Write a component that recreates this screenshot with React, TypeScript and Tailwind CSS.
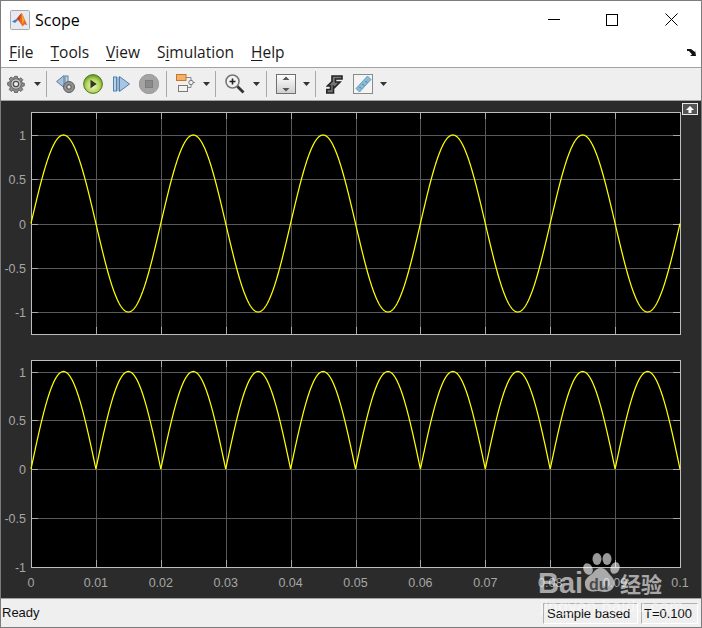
const menus = [
  { pre: "", key: "F", post: "ile" },
  { pre: "", key: "T", post: "ools" },
  { pre: "", key: "V", post: "iew" },
  { pre: "S", key: "i", post: "mulation" },
  { pre: "", key: "H", post: "elp" },
];

const LEFT = 30;
const RIGHT = 679;
const XW = RIGHT - LEFT;

const curve = (fn: (t: number) => number) =>
  Array.from({ length: 1301 }, (_, i) => {
    const t = (i / 1300) * 0.1;
    return `${i ? "L" : "M"}${(LEFT + (t / 0.1) * XW).toFixed(2)} ${fn(t).toFixed(2)}`;
  }).join(" ");

type PlotProps = {
  height: number;
  top: number;
  bottom: number;
  zero: number;
  unit: number;
  rect: boolean;
  xLabels?: boolean;
};

const Plot = ({ height, top, bottom, zero, unit, rect, xLabels }: PlotProps) => {
  const ys = [1, 0.5, 0, -0.5, -1];
  const d = curve((t) => {
    const s = Math.sin((2 * Math.PI * t) / 0.02);
    return zero - unit * (rect ? Math.abs(s) : s);
  });
  return (
    <svg width="700" height={height} className="block" style={{ fontFamily: '"Liberation Sans", Arial, sans-serif' }}>
      <rect x={LEFT + 0.5} y={top + 0.5} width={XW} height={bottom - top} fill="#000" />
      {ys.map((v) => {
        const y = Math.round(zero - v * unit) + 0.5;
        return (
          <g key={v}>
            {y < bottom && <line x1={LEFT} x2={RIGHT} y1={y} y2={y} stroke="#585858" />}
            <line x1={LEFT} x2={LEFT + 7} y1={y} y2={y} stroke="#a8a8a8" />
            <line x1={RIGHT - 7} x2={RIGHT} y1={y} y2={y} stroke="#a8a8a8" />
            <text x="25" y={y + 4.5} textAnchor="end" fontSize="12.5" fill="#a6a6a6">
              {v}
            </text>
          </g>
        );
      })}
      {Array.from({ length: 9 }, (_, i) => {
        const x = Math.round(LEFT + ((i + 1) * XW) / 10) + 0.5;
        return (
          <g key={i}>
            <line x1={x} x2={x} y1={top} y2={bottom} stroke="#585858" />
            <line x1={x} x2={x} y1={top} y2={top + 7} stroke="#a8a8a8" />
            <line x1={x} x2={x} y1={bottom - 7} y2={bottom} stroke="#a8a8a8" />
          </g>
        );
      })}
      <rect x={LEFT + 0.5} y={top + 0.5} width={XW} height={bottom - top} fill="none" stroke="#bdbdbd" />
      <path d={d} fill="none" stroke="#ffff00" strokeWidth="1.25" />
      {xLabels &&
        ["0", "0.01", "0.02", "0.03", "0.04", "0.05", "0.06", "0.07", "0.08", "0.09", "0.1"].map((l, i) => (
          <text key={l} x={LEFT + (i * XW) / 10} y={bottom + 19.5} textAnchor="middle" fontSize="12.5" fill="#a6a6a6">
            {l}
          </text>
        ))}
    </svg>
  );
};

const Caret = ({ className }: { className: string }) => (
  <svg width="7" height="4" viewBox="0 0 7 4" className={className}>
    <path d="M0 0h7L3.5 4z" fill="#333" />
  </svg>
);

const Sep = ({ className }: { className: string }) => <div className={`w-px h-[26px] bg-[#a9a9a9] ${className}`} />;

const Gear = () => (
  <svg width="18" height="18" viewBox="0 0 18 18">
    <path
      d="M7.500 0.500h3l.5 2.200 1.600.7 2-1.200 2.100 2.100-1.200 2 .7 1.600 2.200.5v3l-2.200.5-.7 1.600 1.200 2-2.100 2.100-2-1.200-1.600.7-.5 2.200h-3l-.5-2.200-1.600-.7-2 1.200-2.100-2.100 1.200-2-.7-1.600L-.5 10.500v-3l2.200-.5.7-1.600-1.200-2 2.100-2.100 2 1.200 1.600-.7z"
      transform="translate(1.100 0.900) scale(0.88)"
      fill="#8c8c8c"
      stroke="#5f5f5f"
    />
    <circle cx="9" cy="9" r="5.200" fill="#c9c9c9" stroke="#666" />
    <circle cx="9" cy="9" r="2.700" fill="#efefef" stroke="#4f4f4f" strokeWidth="1.300" />
  </svg>
);

const StepBack = () => (
  <svg width="20" height="20" viewBox="0 0 20 20">
    <path d="M8 1.500v12L0.500 7.500z" fill="#a9c2dc" stroke="#5c7ea3" />
    <rect x="9" y="2" width="3" height="11" fill="#c4d6e8" stroke="#5c7ea3" />
    <circle cx="13" cy="13" r="5.500" fill="#8f8f8f" stroke="#5f5f5f" />
    <circle cx="13" cy="13" r="2.200" fill="#dcdcdc" stroke="#4f4f4f" />
  </svg>
);

const Play = () => (
  <svg width="20" height="20" viewBox="0 0 20 20">
    <defs>
      <radialGradient id="pl" cx="50%" cy="60%" r="55%">
        <stop offset="0%" stopColor="#eef6c8" />
        <stop offset="65%" stopColor="#b3d65f" />
        <stop offset="100%" stopColor="#6f9e2a" />
      </radialGradient>
    </defs>
    <circle cx="10" cy="10" r="9.400" fill="url(#pl)" stroke="#4f7a1d" />
    <path d="M7.500 5.800v8.400l6.200-4.200z" fill="#2f3a1c" />
  </svg>
);

const StepFwd = () => (
  <svg width="18" height="18" viewBox="0 0 18 18">
    <rect x="0.500" y="2" width="3" height="14" fill="#b9d0e6" stroke="#4f7fb0" />
    <rect x="4.500" y="2" width="1" height="14" fill="#4f7fb0" />
    <path d="M6.500 1.500v15L16.500 9z" fill="#a9c5e0" stroke="#4f7fb0" />
  </svg>
);

const Stop = () => (
  <svg width="20" height="20" viewBox="0 0 20 20">
    <circle cx="10" cy="10" r="9.700" fill="#a3a3a3" stroke="#9a9a9a" />
    <rect x="6.500" y="6.500" width="7" height="7" fill="#8a8a8a" stroke="#7d7d7d" />
  </svg>
);

const Blocks = () => (
  <svg width="20" height="20" viewBox="0 0 20 20">
    <path d="M10 3.500h5v5M15 8.500h4M15 8.500v5h-3" fill="none" stroke="#8a8a8a" />
    <rect x="0.500" y="0.500" width="9.500" height="6" fill="#f4b06a" stroke="#c9762a" />
    <rect x="2.500" y="11.500" width="9" height="6" fill="#f2f2f2" stroke="#7a7a7a" />
    <circle cx="15" cy="8.500" r="2.200" fill="#efefef" stroke="#7a7a7a" />
  </svg>
);

const Zoom = () => (
  <svg width="20" height="20" viewBox="0 0 20 20">
    <circle cx="7.500" cy="7.500" r="6.500" fill="#f3f3f3" stroke="#777" strokeWidth="1.600" />
    <path d="M4.500 7.500h6M7.500 4.500v6" stroke="#222" strokeWidth="1.600" />
    <path d="M12.500 12.500l6 6" stroke="#333" strokeWidth="2.800" />
  </svg>
);

const Fit = () => (
  <svg width="20" height="20" viewBox="0 0 20 20">
    <defs>
      <linearGradient id="ft" x1="0" y1="0" x2="0" y2="1">
        <stop offset="0%" stopColor="#ffffff" />
        <stop offset="100%" stopColor="#cfcfcf" />
      </linearGradient>
    </defs>
    <rect x="0.500" y="0.500" width="19" height="19" fill="url(#ft)" stroke="#707070" />
    <path d="M10 2.500l3.500 3.500h-7z M10 17.500l-3.500-3.500h7z" fill="#555" />
  </svg>
);

const CursorTool = () => (
  <svg width="17" height="19" viewBox="0 0 17 19">
    <path
      d="M6 1h10v3H9.500v3H14L8.500 12.500 7.500 11.500V18H0.800v-3.500h3.700V11H1.500L6 6.500z"
      fill="#777"
      stroke="#252525"
      strokeWidth="1.600"
      strokeLinejoin="miter"
    />
  </svg>
);

const Ruler = () => (
  <svg width="20" height="20" viewBox="0 0 20 20">
    <rect x="0.500" y="0.500" width="19" height="19" fill="#f4f4f4" stroke="#8a8a8a" />
    <path d="M3 14.500L14.500 2l3.500 3.500L6.500 18z" fill="#86bcd8" stroke="#6d9fbc" />
    <path d="M6.500 13l1.500 1.500M9.500 10l1.500 1.500M12.500 7l1.500 1.500" stroke="#3f6f8c" />
  </svg>
);

const App = () => {
  return (
    <div
      className="relative w-[702px] h-[628px] overflow-hidden border border-[#7c7c7c] bg-white flex flex-col"
      style={{ fontFamily: '"Liberation Sans", Arial, sans-serif' }}
    >
      {/* title bar */}
      <div className="h-[37px] flex items-center pl-[9px] shrink-0">
        <svg width="20" height="20" viewBox="0 0 20 20" className="shrink-0">
          <rect x="0.500" y="0.500" width="19" height="19" rx="1" fill="#e4e9f2" stroke="#a9a9a9" />
          <path d="M2 11.500l4.500-2.500L8 10l-3 3z" fill="#3f7fbf" />
          <path d="M6.500 9L11.500 3c1.500 1 3.500 8 6 12-2.500-1-3.500-1-5 1.500C11 14 9 10.500 6.500 9z" fill="#e8662a" />
          <path d="M6.500 9L11.500 3 9.500 10.500z" fill="#c93f1f" />
          <path d="M11.500 3c1 1 2 4 3 7l-2 5z" fill="#f5a623" />
        </svg>
        <span className="ml-[5px] text-[16px] text-black" style={{ fontFamily: '"Open Sans", sans-serif' }}>
          Scope
        </span>
        <div className="ml-auto flex items-center pr-[23px]">
          <svg width="12" height="12" viewBox="0 0 12 12" className="mr-[46px]">
            <path d="M0 5.500h12" stroke="#000" />
          </svg>
          <svg width="12" height="12" viewBox="0 0 12 12" className="mr-[47px]">
            <rect x="0.500" y="0.500" width="11" height="11" fill="none" stroke="#000" />
          </svg>
          <svg width="13" height="13" viewBox="0 0 13 13">
            <path d="M0.500 0.500l12 12M12.500 0.500l-12 12" stroke="#000" />
          </svg>
        </div>
      </div>

      {/* menu bar */}
      <div
        className="relative h-[29px] flex items-center pl-2 gap-[17px] shrink-0 text-[15.5px] text-[#1a1a1a]"
        style={{ fontFamily: '"Open Sans", sans-serif' }}
      >
        {menus.map((m) => (
          <span key={m.key}>
            {m.pre}
            <u className="underline-offset-2">{m.key}</u>
            {m.post}
          </span>
        ))}
        <svg width="10" height="9" viewBox="0 0 10 9" className="absolute right-[4px] top-[10px]">
          <path d="M0 1h4l4 3V2l1 6H3l2-1.500L2 3H0z" fill="#111" />
        </svg>
      </div>

      {/* toolbar */}
      <div className="h-[34px] shrink-0 flex items-center bg-[#efefef] border-y border-[#a3a3a3] pl-[6px]">
        <Gear />
        <Caret className="ml-[9px]" />
        <Sep className="ml-[5px]" />
        <div className="ml-[9px]"><StepBack /></div>
        <div className="ml-[7px]"><Play /></div>
        <div className="ml-[10px]"><StepFwd /></div>
        <div className="ml-[8px]"><Stop /></div>
        <Sep className="ml-[7px]" />
        <div className="ml-[9px]"><Blocks /></div>
        <Caret className="ml-[7px]" />
        <Sep className="ml-[5px]" />
        <div className="ml-[9px]"><Zoom /></div>
        <Caret className="ml-[8px]" />
        <Sep className="ml-[6px]" />
        <div className="ml-[9px]"><Fit /></div>
        <Caret className="ml-[7px]" />
        <Sep className="ml-[5px]" />
        <div className="ml-[10px]"><CursorTool /></div>
        <div className="ml-[10px]"><Ruler /></div>
        <Caret className="ml-[7px]" />
      </div>

      {/* scope plots */}
      <div className="relative flex-1 bg-[#2b2b2b] pt-[11px] flex flex-col">
        <Plot height={248} top={0} bottom={222} zero={111.5} unit={88.5} rect={false} />
        <Plot height={237} top={0} bottom={207} zero={109} unit={97.5} rect xLabels />
        <div className="absolute right-[3px] top-[2px] w-[16px] h-[12px] border border-[#e8e8e8] bg-[#555] flex items-center justify-center">
          <svg width="10" height="7" viewBox="0 0 10 7">
            <path d="M5 0l4 4H6.500v3h-3V4H1z" fill="#fff" />
          </svg>
        </div>
      </div>

      {/* status bar */}
      <div className="h-[29px] shrink-0 flex items-center bg-[#efefef] border-t border-[#a3a3a3] text-[13px] text-[#111] pl-px pr-[3px]">
        <span>Ready</span>
        <div className="ml-auto mt-px h-[21px] w-[95px] flex items-center pl-[3px] border-l border-t border-[#b0b0b0] border-r-white border-b-white border-r border-b">
          Sample based
        </div>
        <div className="ml-[3px] mt-px h-[21px] w-[57px] flex items-center pl-[2px] border-l border-t border-[#b0b0b0] border-r-white border-b-white border-r border-b">
          T=0.100
        </div>
      </div>

      {/* watermark */}
      <div className="absolute left-[537px] top-[552px] w-[130px] h-[62px] text-white/60 pointer-events-none">
        <span className="absolute left-0 top-[14px] text-[29px] leading-[32px] font-bold">Bai</span>
        <svg width="38" height="41" viewBox="0 0 38 41" className="absolute left-[44px] top-0">
          <g fill="#fff" fillOpacity="0.6">
            <ellipse cx="6" cy="16" rx="4.500" ry="6" transform="rotate(-25 6 16)" />
            <ellipse cx="15" cy="6" rx="4.500" ry="6" />
            <ellipse cx="25" cy="6" rx="4.500" ry="6" />
            <ellipse cx="33" cy="15" rx="4.500" ry="6" transform="rotate(20 33 15)" />
            <path d="M19 15c5 0 7 5 11 9 5 6 2 15-7 15-3 0-5-1-7-1-5 1-12 1-13-6-1-7 5-9 8-12 2-3 4-5 8-5z" />
          </g>
        </svg>
        <span className="absolute left-[51px] top-[22px] text-[16px] leading-[20px] font-bold text-[#4a4a4a]">du</span>
        <span
          className="absolute left-[82px] top-[17px] text-[21px] leading-[26px] font-bold"
          style={{ fontFamily: '"Noto Sans CJK SC", sans-serif' }}
        >
          经验
        </span>
        <span className="absolute left-[2px] top-[45px] text-[17px] leading-[18px] tracking-[0.4px] text-white/50">jingyan.baidu.com</span>
      </div>
    </div>
  );
};

export default App;
